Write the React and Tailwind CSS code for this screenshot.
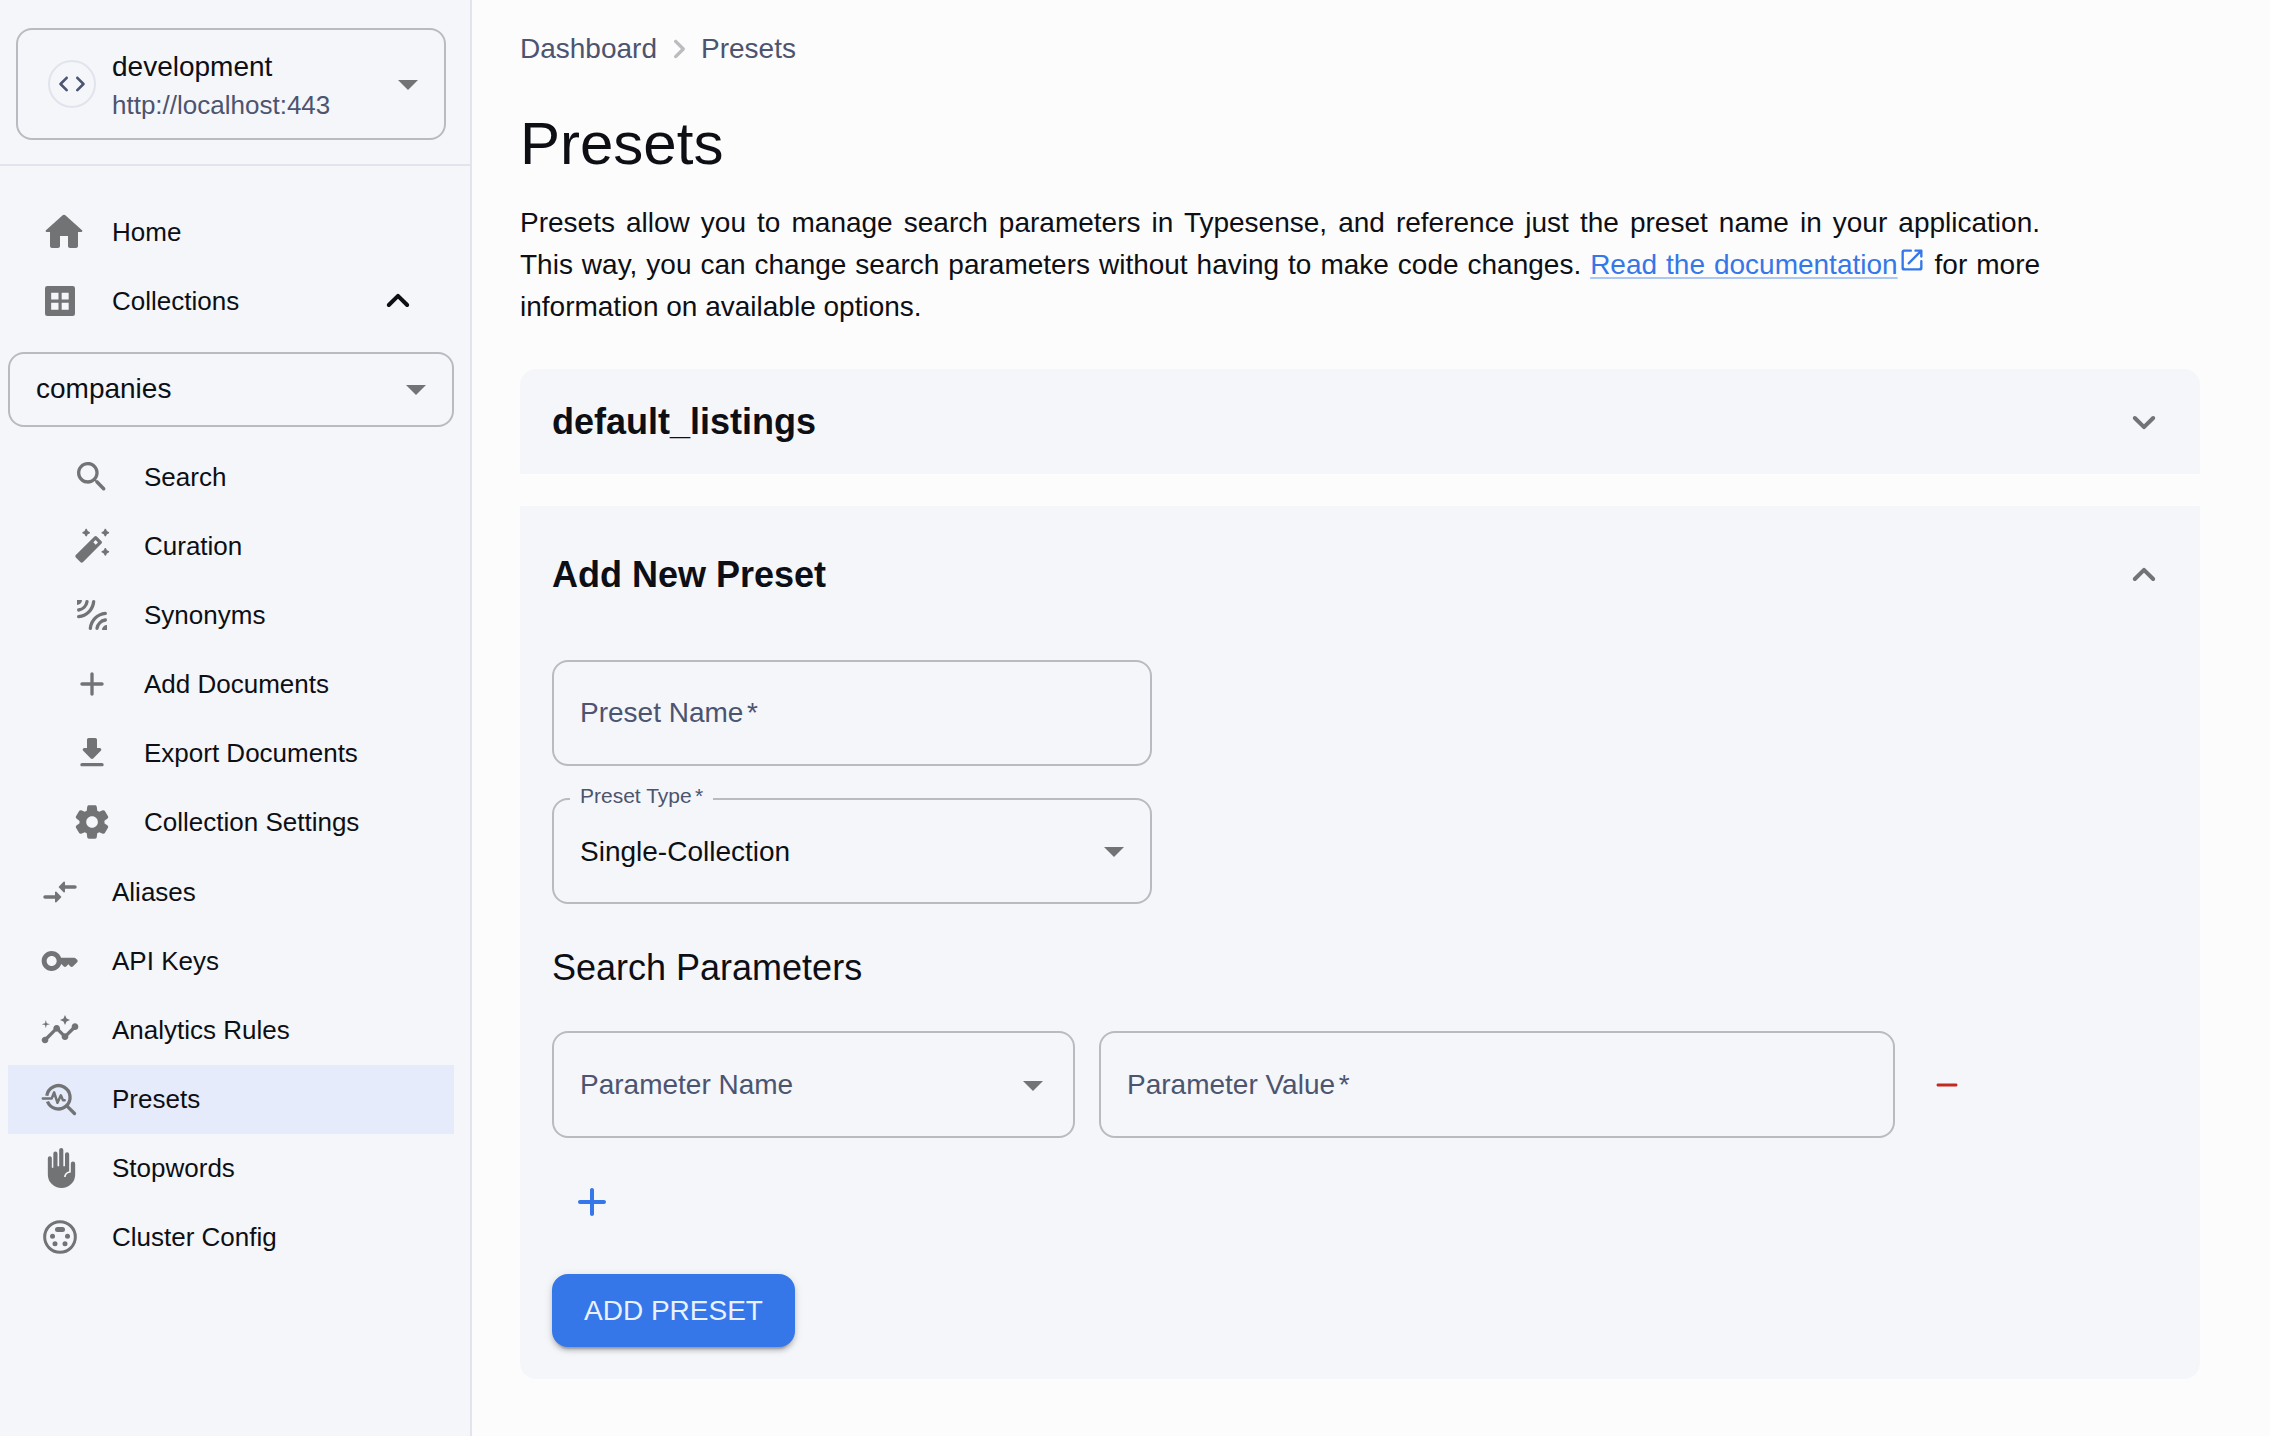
const FILL = {
  home: "M10 19v-5h4v5c0 .55.45 1 1 1h3c.55 0 1-.45 1-1v-7h1.7c.46 0 .68-.57.33-.87L12.67 3.6c-.38-.34-.96-.34-1.34 0l-8.36 7.53c-.34.3-.13.87.33.87H5v7c0 .55.45 1 1 1h3c.55 0 1-.45 1-1z",
  search: "M15.5 14h-.79l-.28-.27c1.2-1.4 1.82-3.31 1.48-5.34-.47-2.78-2.79-5-5.59-5.34-4.23-.52-7.79 3.04-7.27 7.27.34 2.8 2.56 5.12 5.34 5.59 2.03.34 3.94-.28 5.34-1.48l.27.28v.79l4.25 4.25c.41.41 1.08.41 1.49 0 .41-.41.41-1.08 0-1.49L15.5 14zm-6 0C7.01 14 5 11.99 5 9.5S7.01 5 9.5 5 14 7.01 14 9.5 11.99 14 9.5 14z",
  wand: "m20.45 6 .49-1.06L22 4.45c.39-.18.39-.73 0-.91l-1.06-.49L20.45 2c-.18-.39-.73-.39-.91 0l-.49 1.06-1.05.49c-.39.18-.39.73 0 .91l1.06.49.49 1.05c.17.39.73.39.9 0zM8.95 6l.49-1.06 1.06-.49c.39-.18.39-.73 0-.91l-1.06-.48L8.95 2c-.17-.39-.73-.39-.9 0l-.49 1.06-1.06.49c-.39.18-.39.73 0 .91l1.06.49L8.05 6c.17.39.73.39.9 0zm10.6 7.5-.49 1.06-1.06.49c-.39.18-.39.73 0 .91l1.06.49.49 1.06c.18.39.73.39.91 0l.49-1.06 1.05-.5c.39-.18.39-.73 0-.91l-1.06-.49-.49-1.06c-.17-.38-.73-.38-.9.01zm-1.84-4.38-2.83-2.83a.9959.9959 0 0 0-1.41 0L2.29 17.46c-.39.39-.39 1.02 0 1.41l2.83 2.83c.39.39 1.02.39 1.41 0L17.7 10.53c.4-.38.4-1.02.01-1.41zm-3.5 2.09L12.8 9.8l1.38-1.38 1.41 1.41-1.38 1.38z",
  add: "M18 13h-5v5c0 .55-.45 1-1 1s-1-.45-1-1v-5H6c-.55 0-1-.45-1-1s.45-1 1-1h5V6c0-.55.45-1 1-1s1 .45 1 1v5h5c.55 0 1 .45 1 1s-.45 1-1 1z",
  remove: "M18 13H6c-.55 0-1-.45-1-1s.45-1 1-1h12c.55 0 1 .45 1 1s-.45 1-1 1z",
  download: "M16.59 9H15V4c0-.55-.45-1-1-1h-4c-.55 0-1 .45-1 1v5H7.41c-.89 0-1.34 1.08-.71 1.71l4.59 4.59c.39.39 1.02.39 1.41 0l4.59-4.59c.63-.63.19-1.71-.7-1.71zM5 19c0 .55.45 1 1 1h12c.55 0 1-.45 1-1s-.45-1-1-1H6c-.55 0-1 .45-1 1z",
  settings: "M19.5 12c0-.23-.01-.45-.03-.68l1.86-1.41c.4-.3.51-.86.26-1.3l-1.87-3.23c-.25-.44-.79-.62-1.25-.42l-2.15.91c-.37-.26-.76-.49-1.17-.68l-.29-2.31c-.06-.5-.49-.88-.99-.88h-3.73c-.51 0-.94.38-1 .88l-.29 2.31c-.41.19-.8.42-1.17.68l-2.15-.91c-.46-.2-1-.02-1.25.42L2.41 8.62c-.25.44-.14.99.26 1.3l1.86 1.41c-.02.22-.03.44-.03.67s.01.45.03.68l-1.86 1.41c-.4.3-.51.86-.26 1.3l1.87 3.23c.25.44.79.62 1.25.42l2.15-.91c.37.26.76.49 1.17.68l.29 2.31c.06.5.49.88.99.88h3.73c.5 0 .93-.38.99-.88l.29-2.31c.41-.19.8-.42 1.17-.68l2.15.91c.46.2 1 .02 1.25-.42l1.87-3.23c.25-.44.14-.99-.26-1.3l-1.86-1.41c.03-.23.04-.45.04-.68zm-7.46 3.5c-1.93 0-3.5-1.57-3.5-3.5s1.57-3.5 3.5-3.5 3.5 1.57 3.5 3.5-1.57 3.5-3.5 3.5z",
  compare: "M9.01 14H3c-.55 0-1 .45-1 1s.45 1 1 1h6.01v1.79c0 .45.54.67.85.35l2.78-2.79c.19-.2.19-.51 0-.71l-2.78-2.79c-.31-.32-.85-.09-.85.35V14zm5.98-2.21V10H21c.55 0 1-.45 1-1s-.45-1-1-1h-6.01V6.21c0-.45-.54-.67-.85-.35l-2.78 2.79c-.19.2-.19.51 0 .71l2.78 2.79c.31.31.85.09.85-.36z",
  key: "M20.59 10H12.65C11.83 7.67 9.61 6 7 6c-3.31 0-6 2.69-6 6s2.69 6 6 6c2.61 0 4.83-1.67 5.65-4H13l1.29 1.29c.39.39 1.02.39 1.41 0L17 14l1.29 1.29c.39.39 1.03.39 1.42 0l2.59-2.61c.39-.39.39-1.03-.01-1.42l-.99-.97A1 1 0 0 0 20.59 10zM7 15c-1.65 0-3-1.35-3-3s1.35-3 3-3 3 1.35 3 3-1.35 3-3 3z",
  insights: "M21 8c-1.45 0-2.26 1.44-1.93 2.51l-3.55 3.56c-.3-.09-.74-.09-1.04 0l-2.55-2.55C12.27 10.45 11.46 9 10 9c-1.45 0-2.27 1.44-1.93 2.52l-4.56 4.55C2.44 15.74 1 16.55 1 18c0 1.1.9 2 2 2 1.45 0 2.26-1.44 1.93-2.51l4.55-4.56c.3.09.74.09 1.04 0l2.55 2.55C12.73 16.55 13.54 18 15 18c1.45 0 2.27-1.44 1.93-2.52l3.56-3.55c1.07.33 2.51-.48 2.51-1.93 0-1.1-.9-2-2-2zM15 9l.94-2.07L18 6l-2.06-.93L15 3l-.92 2.07L12 6l2.08.93zM3.5 11L4 9l2-.5L4 8l-.5-2L3 8l-2 .5L3 9z",
  dropdown: "M7 10l5 5 5-5z",
  less: "M11.29 8.71 6.7 13.3c-.39.39-.39 1.02 0 1.41.39.39 1.02.39 1.41 0L12 10.83l3.88 3.88c.39.39 1.02.39 1.41 0 .39-.39.39-1.02 0-1.41L12.7 8.71c-.38-.39-1.02-.39-1.41 0z",
  more: "M15.88 9.29 12 13.17 8.12 9.29c-.39-.39-1.02-.39-1.41 0-.39.39-.39 1.02 0 1.41l4.59 4.59c.39.39 1.02.39 1.41 0l4.59-4.59c.39-.39.39-1.02 0-1.41-.39-.38-1.03-.39-1.42 0z",
  next: "M9.29 6.71c-.39.39-.39 1.02 0 1.41L13.17 12l-3.88 3.88c-.39.39-.39 1.02 0 1.41.39.39 1.02.39 1.41 0l4.59-4.59c.39-.39.39-1.02 0-1.41L10.7 6.7c-.38-.38-1.02-.38-1.41.01z",
  open: "M18 19H6c-.55 0-1-.45-1-1V6c0-.55.45-1 1-1h5c.55 0 1-.45 1-1s-.45-1-1-1H5c-1.11 0-2 .9-2 2v14c0 1.1.9 2 2 2h14c1.1 0 2-.9 2-2v-6c0-.55-.45-1-1-1s-1 .45-1 1v5c0 .55-.45 1-1 1zM14 4c0 .55.45 1 1 1h2.59l-9.13 9.13c-.39.39-.39 1.02 0 1.41.39.39 1.02.39 1.41 0L19 6.41V9c0 .55.45 1 1 1s1-.45 1-1V4c0-.55-.45-1-1-1h-5c-.55 0-1 .45-1 1z",
  code: "M8.7 15.9 4.8 12l3.9-3.9c.39-.39.39-1.01 0-1.4-.39-.39-1.01-.39-1.4 0l-4.59 4.59c-.39.39-.39 1.02 0 1.41l4.59 4.6c.39.39 1.01.39 1.4 0 .39-.39.39-1.01 0-1.4zm6.6 0 3.9-3.9-3.9-3.9c-.39-.39-.39-1.01 0-1.4.39-.39 1.01-.39 1.4 0l4.59 4.59c.39.39.39 1.02 0 1.41l-4.59 4.6c-.39.39-1.01.39-1.4 0-.39-.39-.39-1.01 0-1.4z",
};

const DRAWN = {
  grid: (
    <path
      fillRule="evenodd"
      d="M4.4 3h15.2A1.4 1.4 0 0 1 21 4.4v15.2a1.4 1.4 0 0 1-1.4 1.4H4.4A1.4 1.4 0 0 1 3 19.600V4.400A1.400 1.400 0 0 1 4.400 3zM6.700 7v4.100h4.400V7zM13 7v4.100h4.200V7zM6.700 13v4.200h4.400V13zM13 13v4.200h4.200V13z"
    />
  ),
  waves: (
    <>
      <path d="M3 3h3a3 3 0 0 1-3 3zM21 21h-3a3 3 0 0 1 3-3z" />
      <g fill="none" stroke="currentColor" strokeWidth="2" strokeLinecap="round">
        <path d="M9 4A6 6 0 0 1 4 9M13 4A10 10 0 0 1 4 13M15 20A6 6 0 0 1 20 15M11 20A10 10 0 0 1 20 11" />
      </g>
    </>
  ),
  troubleshoot: (
    <g fill="none" stroke="currentColor" strokeLinecap="round" strokeLinejoin="round">
      <path strokeWidth="2" strokeLinecap="butt" d="M4.100 10A7 7 0 1 1 4.500 13.500" />
      <path strokeWidth="2" d="M16.400 16.400 20.700 20.700" />
      <path strokeWidth="1.500" d="M1.700 11.750H7L8.500 8 10.500 14.300 12.500 9.800 13.800 12.750H14.800" />
    </g>
  ),
  hand: (
    <path d="M4.700 6.100a1.200 1.200 0 0 1 2.400 0v5.700h.9V3.300a1.250 1.250 0 0 1 2.500 0V11h1V1.250a1.250 1.250 0 0 1 2.500 0V11h1V3.800a1.250 1.250 0 0 1 2.500 0v10.100c-1.700.4-3 1.800-3.100 3.500h1c.1-1.500 1.300-2.600 3.100-2.700V9.400a1.300 1.250 0 0 1 2.600 0V16a8.200 8 0 0 1-16.400 0z" />
  ),
  cluster: (
    <>
      <circle cx="12" cy="12" r="9.200" fill="none" stroke="currentColor" strokeWidth="1.800" />
      <rect x="9" y="6" width="6" height="3" rx="1.500" />
      <circle cx="7.500" cy="11.500" r="1.500" />
      <circle cx="16.500" cy="11.500" r="1.500" />
      <circle cx="9" cy="16" r="1.500" />
      <circle cx="15" cy="16" r="1.500" />
    </>
  ),
};

function Icon({ name, className }) {
  return (
    <svg viewBox="0 0 24 24" fill="currentColor" className={className} aria-hidden="true">
      {DRAWN[name] ?? <path d={FILL[name]} />}
    </svg>
  );
}

function NavItem({ icon, label, sub, active, large, children }) {
  return (
    <div
      className={`mx-2 flex h-[69px] items-center pb-[2px] ${sub ? "pl-16" : "pl-8"} ${active ? "bg-[#e5ebfa]" : ""}`}
    >
      <span className="flex w-[72px] shrink-0">
        <Icon name={icon} className={`${large ? "size-12" : "size-10"} text-[#727375]`} />
      </span>
      <span className="grow text-[26px] leading-[38px]">{label}</span>
      {children}
    </div>
  );
}

function Field({ label, required, value, floating, dropdown, className }) {
  const text = (
    <>
      {label}
      {required && <span className={floating ? "-ml-px" : "-ml-[2px]"}>{"\u2009*"}</span>}
    </>
  );
  return (
    <div className={`relative flex items-center rounded-2xl border-2 border-[#b9bbc0] pl-[26px] ${className}`}>
      {floating && (
        <span className="absolute -top-4 left-4 w-[143px] bg-[#f4f6fa] pl-[10px] text-[21px] leading-6 whitespace-nowrap text-[#4c546f]">
          {text}
        </span>
      )}
      <span className={`grow text-[28px] leading-10 ${value ? "pt-[2px]" : "text-[#4c546f]"}`}>{value ?? text}</span>
      {dropdown && <Icon name="dropdown" className="size-12 shrink-0 text-[#727375]" />}
    </div>
  );
}

const subItems = [
  ["search", "Search"],
  ["wand", "Curation"],
  ["waves", "Synonyms"],
  ["add", "Add Documents"],
  ["download", "Export Documents"],
  ["settings", "Collection Settings"],
];

const lowerItems = [
  ["compare", "Aliases"],
  ["key", "API Keys"],
  ["insights", "Analytics Rules"],
  ["troubleshoot", "Presets"],
  ["hand", "Stopwords"],
  ["cluster", "Cluster Config"],
];

function Sidebar() {
  return (
    <aside className="h-full w-[472px] shrink-0 border-r-2 border-[#e1e4ec] bg-[#f4f6fa]">
      <div className="h-[166px] border-b-2 border-[#e1e4ec] pt-7 pl-4">
        <div className="flex h-28 w-[430px] items-center rounded-2xl border-2 border-[#b9bbc0] pr-3 pl-[30px]">
          <span className="flex size-12 items-center justify-center rounded-full border-2 border-[#e1e4ec] text-[#4c546f]">
            <Icon name="code" className="size-8" />
          </span>
          <div className="ml-4 grow pt-[3px]">
            <div className="text-[28px] leading-[38px]">development</div>
            <div className="text-[26px] leading-[38px] text-[#4c546f]">http://localhost:443</div>
          </div>
          <Icon name="dropdown" className="size-12 text-[#727375]" />
        </div>
      </div>
      <nav className="pt-8">
        <NavItem icon="home" label="Home" large />
        <NavItem icon="grid" label="Collections">
          <Icon name="less" className="mr-10 size-12" />
        </NavItem>
        <div className="mx-2 mt-4 mb-4 flex h-[75px] w-[446px] items-center rounded-2xl border-2 border-[#b9bbc0] pr-3 pb-px pl-[26px]">
          <span className="grow text-[28px] leading-[38px]">companies</span>
          <Icon name="dropdown" className="size-12 text-[#727375]" />
        </div>
        {subItems.map(([icon, label]) => (
          <NavItem key={label} icon={icon} label={label} sub />
        ))}
        <div className="mt-px w-[462px]">
          {lowerItems.map(([icon, label]) => (
            <NavItem key={label} icon={icon} label={label} active={label === "Presets"} />
          ))}
        </div>
      </nav>
    </aside>
  );
}

export default function App() {
  return (
    <div className="flex h-[1436px] w-[2270px] overflow-hidden bg-[#fcfcfc] font-['Liberation_Sans',Arial,sans-serif] text-[#0d0f14]">
      <Sidebar />
      <main className="w-[1728px] pl-12">
        <div className="mt-[29px] flex h-10 items-center text-[28px] leading-10 text-[#4c546f]">
          <span>Dashboard</span>
          <Icon name="next" className="mx-[2px] size-10 text-[#bbbcc0]" />
          <span>Presets</span>
        </div>
        <h1 className="mt-[39px] text-[60px] leading-[72px]">Presets</h1>
        <p className="mt-[22px] w-[1520px] text-justify text-[28px] leading-[42px]">
          Presets allow you to manage search parameters in Typesense, and reference just the preset name in your
          application. This way, you can change search parameters without having to make code changes.{" "}
          <a className="text-[#3577e8]">
            <span className="underline decoration-[#3577e8]/40 decoration-2 underline-offset-[3px]">
              Read the documentation
            </span>
            <Icon name="open" className="inline size-7 align-baseline" />
          </a>{" "}
          for more information on available options.
        </p>

        <section className="mt-[41px] flex h-[105px] items-center justify-between rounded-t-2xl bg-[#f4f6fa] px-8">
          <h2 className="text-[36px] leading-[50px] font-bold">default_listings</h2>
          <Icon name="more" className="size-12 text-[#727375]" />
        </section>

        <section className="mt-8 h-[873px] rounded-b-2xl bg-[#f4f6fa] px-8 pt-11">
          <div className="flex h-[50px] items-center justify-between">
            <h2 className="text-[36px] leading-[50px] font-bold">Add New Preset</h2>
            <Icon name="less" className="size-12 text-[#727375]" />
          </div>
          <Field className="mt-[60px] h-[106px] w-[600px]" label="Preset Name" required />
          <Field className="mt-8 h-[106px] w-[600px] pr-3" label="Preset Type" required floating value="Single-Collection" dropdown />
          <h3 className="mt-[39px] text-[36px] leading-[50px]">Search Parameters</h3>
          <div className="mt-[38px] flex items-center">
            <Field className="h-[107px] w-[523px] pr-4" label="Parameter Name" dropdown />
            <Field className="ml-6 h-[107px] w-[796px]" label="Parameter Value" required />
            <Icon name="remove" className="mt-px ml-[34px] size-9 text-[#c22a20]" />
          </div>
          <Icon name="add" className="mt-10 ml-4 size-12 text-[#3577e8]" />
          <button className="mt-12 flex h-[73px] w-[243px] items-center justify-center rounded-2xl bg-[#3577e8] text-[28px] text-[#eaf1fe] shadow-[0_6px_2px_-4px_rgba(0,0,0,0.2),0_4px_4px_0_rgba(0,0,0,0.14),0_2px_10px_0_rgba(0,0,0,0.12)]">
            ADD PRESET
          </button>
        </section>
      </main>
    </div>
  );
}
